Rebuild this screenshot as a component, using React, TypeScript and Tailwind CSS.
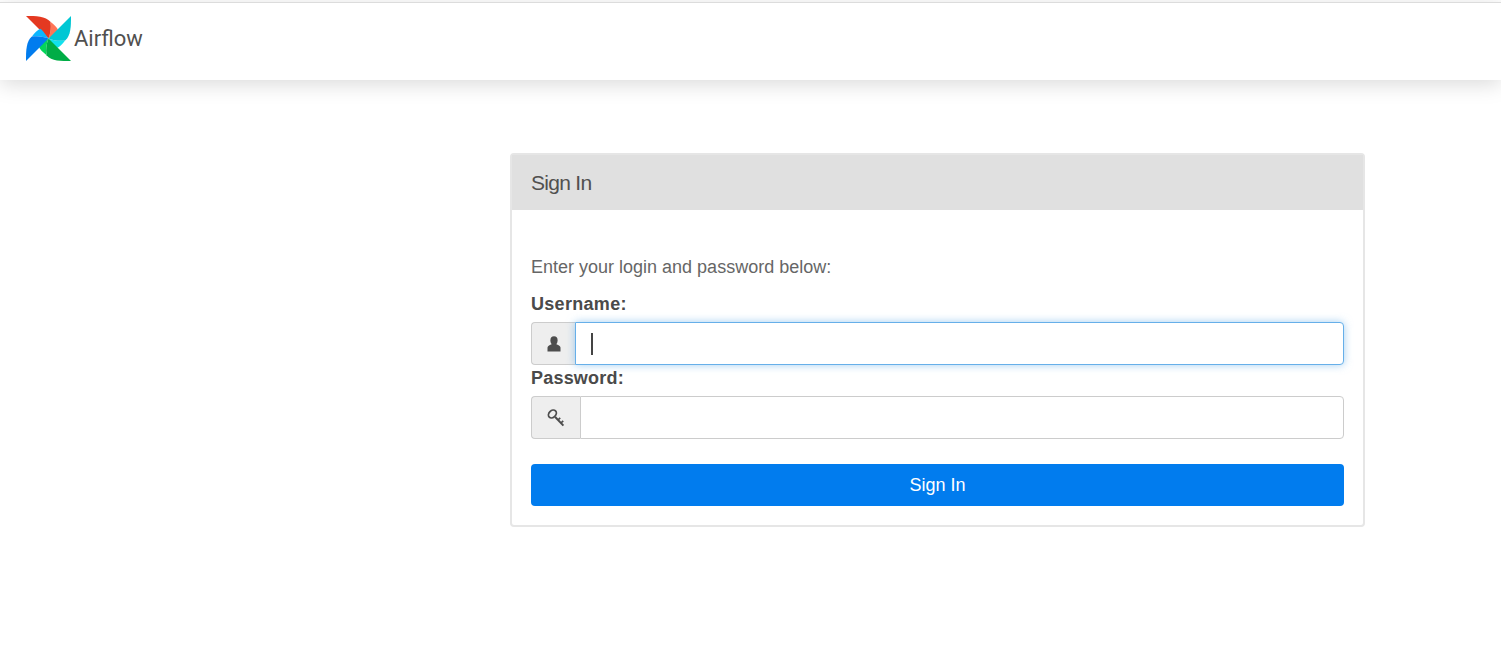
const blades = [
  { angle: 0, dark: '#e43921', light: '#ff7557' },
  { angle: 90, dark: '#00c7d4', light: '#11e1ee' },
  { angle: 180, dark: '#00ad46', light: '#04d659' },
  { angle: 270, dark: '#017cee', light: '#0cb6ff' },
]

const PinwheelLogo = () => (
  <svg width="45" height="45" viewBox="0 0 46 46" className="block shrink-0">
    {blades.map((b) => (
      <g key={b.angle} transform={`rotate(${b.angle} 23 23)`}>
        <path d="M25 6 C29 9 32 12 33 15 C30 18 26 21 23 23 C25 18 26 12 25 6Z" fill={b.light} />
        <path d="M0 0 C10 0 20 0 25 6 C26 12 25 18 23 23 Z" fill={b.dark} />
      </g>
    ))}
  </svg>
)

const UserIcon = () => (
  <svg width="14" height="16" viewBox="0 0 14 16" fill="#4d4d4d">
    <ellipse cx="7" cy="4.4" rx="3.6" ry="4.2" />
    <path d="M0.5 15.5 V11.6 C0.5 9.8 3 9 5 8 H9 C11 9 13.5 9.8 13.5 11.6 V15.5Z" />
  </svg>
)

const KeyIcon = () => (
  <svg width="18" height="18" viewBox="0 0 18 18" fill="none" stroke="#4d4d4d">
    <ellipse cx="5.4" cy="5" rx="4.4" ry="3.4" transform="rotate(-45 5.4 5)" strokeWidth="1.8" />
    <path d="M8.2 8 L16.4 16.6" strokeWidth="2" />
    <path d="M11 11 L13.2 8.8 M14 14 L16.2 11.8" strokeWidth="1.7" />
  </svg>
)

export default function App() {
  return (
    <div className="min-h-[665px] bg-white pt-[2px] font-['Liberation_Sans',Arial,sans-serif] text-[18px] text-[#51504f]">
      <nav className="flex h-[78px] items-center border-t border-[#dcdcdc] bg-white pb-[6px] pl-[26px] shadow-[0_4px_20px_rgba(0,0,0,0.15)]">
        <div className="flex items-center gap-[3px]">
          <PinwheelLogo />
          <span className="font-['Roboto',sans-serif] text-[22px] leading-none text-[#51504f]">Airflow</span>
        </div>
      </nav>

      <div className="ml-[510px] mt-[73px] w-[855px] rounded-[4px] border-2 border-[#e6e6e6] bg-white">
        <div className="flex h-[55px] items-center bg-[#e0e0e0] px-[19px] text-[21px] tracking-[-0.7px] text-[#51504f]">Sign In</div>
        <div className="px-[19px] pb-[19px] pt-[47px]">
          <p className="h-[20px] text-[18px] leading-[20px] text-[#666666]">Enter your login and password below:</p>
          <label className="mt-[17px] block h-[20px] text-[18px] font-bold leading-[20px] tracking-[0.3px] text-[#4a4a4a]">Username:</label>
          <div className="mt-[8px] flex h-[43px]">
            <span className="flex w-[44px] items-center justify-center rounded-l-[4px] border border-r-0 border-[#cccccc] bg-[#eeeeee]">
              <UserIcon />
            </span>
            <div className="flex flex-1 items-center rounded-r-[4px] border border-[#66afe9] bg-white pl-[15px] shadow-[0_0_8px_rgba(102,175,233,0.6)]">
              <span className="h-[22px] w-[2px] bg-[#444444]" />
            </div>
          </div>
          <label className="mt-[3px] block h-[20px] text-[18px] font-bold leading-[20px] tracking-[0.2px] text-[#4a4a4a]">Password:</label>
          <div className="mt-[8px] flex h-[43px]">
            <span className="flex w-[49px] items-center justify-center rounded-l-[4px] border border-r-0 border-[#cccccc] bg-[#eeeeee]">
              <KeyIcon />
            </span>
            <div className="flex-1 rounded-r-[4px] border border-[#cccccc] bg-white" />
          </div>
          <button className="mt-[25px] flex h-[42px] w-full items-center justify-center rounded-[4px] bg-[#017cee] pt-[1px] text-[18px] text-white">
            Sign In
          </button>
        </div>
      </div>
    </div>
  )
}
